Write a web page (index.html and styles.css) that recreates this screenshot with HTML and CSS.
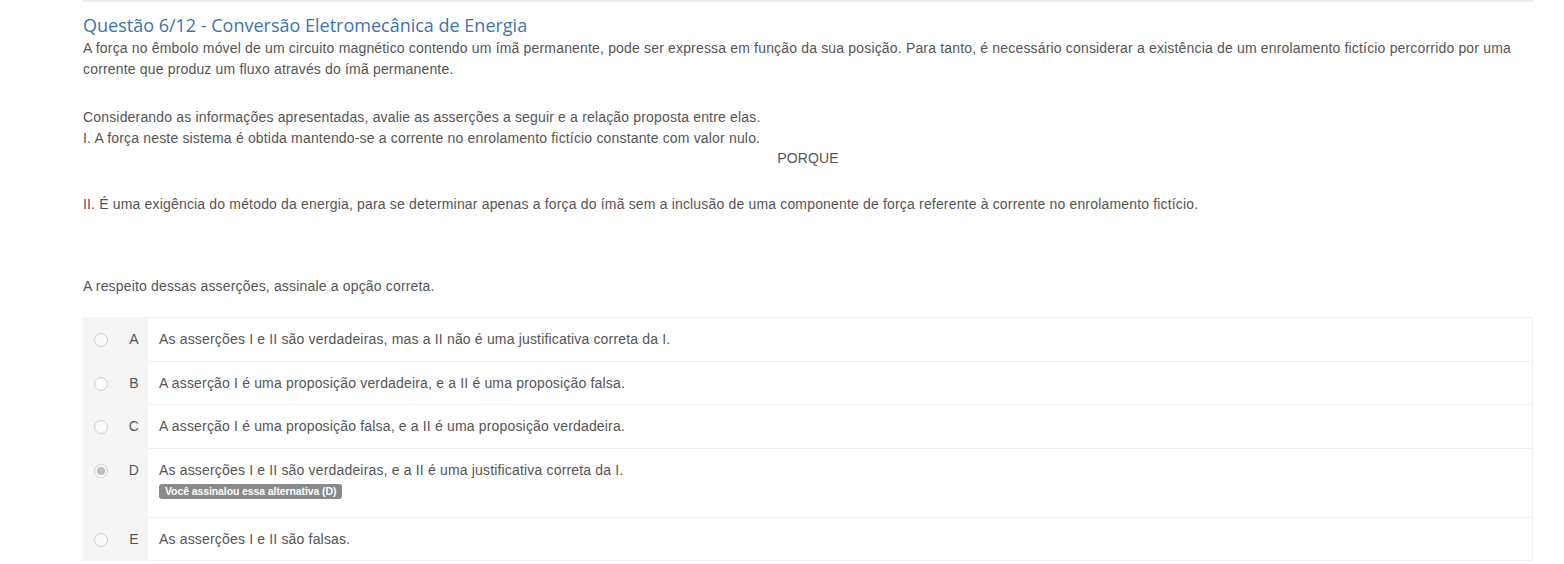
FILE: index.html
```html
<!DOCTYPE html>
<html lang="pt-BR">
<head>
    <meta charset="UTF-8">
    <meta name="viewport" content="width=device-width, initial-scale=1.0">
    <title>Questão 6/12</title>
    <link rel="stylesheet" href="styles.css">
</head>
<body>
    <div class="question">
        <h3 class="question-title">Questão 6/12 - Conversão Eletromecânica de Energia</h3>
        <p class="intro">A força no êmbolo móvel de um circuito magnético contendo um ímã permanente, pode ser expressa em função da sua posição. Para tanto, é necessário considerar a existência de um enrolamento fictício percorrido por uma corrente que produz um fluxo através do ímã permanente.</p>

        <p class="statement">Considerando as informações apresentadas, avalie as asserções a seguir e a relação proposta entre elas.<br>
        I. A força neste sistema é obtida mantendo-se a corrente no enrolamento fictício constante com valor nulo.</p>
        <p class="porque">PORQUE</p>
        <p class="statement">II. É uma exigência do método da energia, para se determinar apenas a força do ímã sem a inclusão de uma componente de força referente à corrente no enrolamento fictício.</p>

        <p class="ask">A respeito dessas asserções, assinale a opção correta.</p>

        <!-- alternativas -->
        <div class="options">
            <div class="option">
                <div class="opt-side"><span class="radio"></span><span class="letter">A</span></div>
                <div class="opt-text">As asserções I e II são verdadeiras, mas a II não é uma justificativa correta da I.</div>
            </div>
            <div class="option">
                <div class="opt-side"><span class="radio"></span><span class="letter">B</span></div>
                <div class="opt-text">A asserção I é uma proposição verdadeira, e a II é uma proposição falsa.</div>
            </div>
            <div class="option">
                <div class="opt-side"><span class="radio"></span><span class="letter">C</span></div>
                <div class="opt-text">A asserção I é uma proposição falsa, e a II é uma proposição verdadeira.</div>
            </div>
            <div class="option">
                <div class="opt-side"><span class="radio checked"></span><span class="letter">D</span></div>
                <div class="opt-text">As asserções I e II são verdadeiras, e a II é uma justificativa correta da I.
                    <div class="marked"><span class="label">Você assinalou essa alternativa (D)</span></div>
                </div>
            </div>
            <div class="option last">
                <div class="opt-side"><span class="radio"></span><span class="letter">E</span></div>
                <div class="opt-text">As asserções I e II são falsas.</div>
            </div>
        </div>
    </div>
</body>
</html>
```

FILE: styles.css
```css
body {
    margin: 0;
    font-family: 'Liberation Sans', Arial, sans-serif;
    font-size: 14px;
    line-height: 20px;
    letter-spacing: 0.17px;
    color: #555;
    background-color: #fff;
}
.question {
    margin-left: 83px;
    width: 1450px;
    border-top: 2px solid #eee;
}
.question-title {
    font-family: 'Open Sans', sans-serif;
    font-weight: normal;
    font-size: 18px;
    line-height: 22px;
    letter-spacing: 0;
    color: #3f73ad;
    margin: 12px 0 2px 0;
}
p {
    margin: 0;
}
.intro {
    line-height: 21px;
    margin-bottom: 27px;
}
.statement {
    line-height: 20.5px;
}
.porque {
    text-align: center;
    line-height: 20.5px;
    margin-bottom: 25px;
}
.ask {
    margin-top: 62px;
    margin-bottom: 21px;
}
.options {
    border-right: 1px solid #f0f0f0;
}
.option {
    display: flex;
}
.opt-side {
    width: 65px;
    flex-shrink: 0;
    background-color: #f5f5f5;
    display: flex;
    align-items: flex-start;
    padding-top: 12px;
    box-sizing: border-box;
}
.radio {
    width: 12px;
    height: 12px;
    border: 1px solid #cfcfcf;
    border-radius: 50%;
    background-color: #fafafa;
    margin: 4px 0 0 11px;
    position: relative;
}
.radio.checked::after {
    content: '';
    position: absolute;
    left: 2px;
    top: 2px;
    width: 8px;
    height: 8px;
    border-radius: 50%;
    background-color: #bdbdbd;
}
.letter {
    margin-left: 20px;
    width: 12px;
    text-align: center;
}
.opt-text {
    flex: 1;
    border-top: 1px solid #f0f0f0;
    padding: 11px 11px 11.5px;
}
.option.last .opt-text {
    border-bottom: 1px solid #f0f0f0;
}
.marked {
    margin-top: 3px;
    margin-bottom: 6.5px;
    line-height: 15px;
}
.label {
    display: inline-block;
    background-color: #8a8a8a;
    color: #fff;
    font-size: 10.5px;
    font-weight: bold;
    letter-spacing: -0.1px;
    line-height: 11px;
    padding: 2px 6px 2px;
    border-radius: 3px;
}
```
